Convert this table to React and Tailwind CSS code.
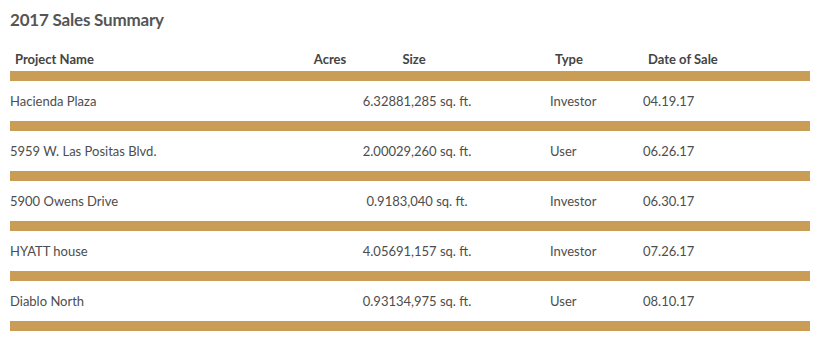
const rows = [
  { name: 'Hacienda Plaza', size: '6.32881,285 sq. ft.', type: 'Investor', date: '04.19.17' },
  { name: '5959 W. Las Positas Blvd.', size: '2.00029,260 sq. ft.', type: 'User', date: '06.26.17' },
  { name: '5900 Owens Drive', size: '0.9183,040 sq. ft.', type: 'Investor', date: '06.30.17' },
  { name: 'HYATT house', size: '4.05691,157 sq. ft.', type: 'Investor', date: '07.26.17' },
  { name: 'Diablo North', size: '0.93134,975 sq. ft.', type: 'User', date: '08.10.17' },
]

export default function App() {
  return (
    <div className="w-[820px] h-[341px] bg-white pl-[10px] text-[#4d4d4d]" style={{ fontFamily: 'Lato, "Open Sans", sans-serif' }}>
      {/* Title */}
      <div className="h-[40px] flex items-center">
        <h2 className="text-[17px] font-bold text-[#555] tracking-[-0.2px]">2017 Sales Summary</h2>
      </div>

      {/* Header */}
      <div className="h-[31px] w-[800px] flex items-end pb-[2px] text-[13px] font-bold text-[#444]">
        <div className="w-[290px] pl-[5px]">Project Name</div>
        <div className="w-[60px] text-center">Acres</div>
        <div className="w-[108px] text-center">Size</div>
        <div className="w-[175px] pl-[87px]">Type</div>
        <div className="pl-[5px]">Date of Sale</div>
      </div>

      {rows.map((r) => (
        <div key={r.name} className="w-[800px]">
          <div className="h-[10px] bg-[#c99d55]" />
          <div className="h-[40px] flex items-center pt-[2px] text-[13px] text-[#4d4d4d]">
            <div className="w-[290px]">{r.name}</div>
            <div className="w-[234px] text-center">{r.size}</div>
            <div className="w-[109px] pl-[16px]">{r.type}</div>
            <div>{r.date}</div>
          </div>
        </div>
      ))}
      <div className="h-[10px] w-[800px] bg-[#c99d55]" />
    </div>
  )
}
